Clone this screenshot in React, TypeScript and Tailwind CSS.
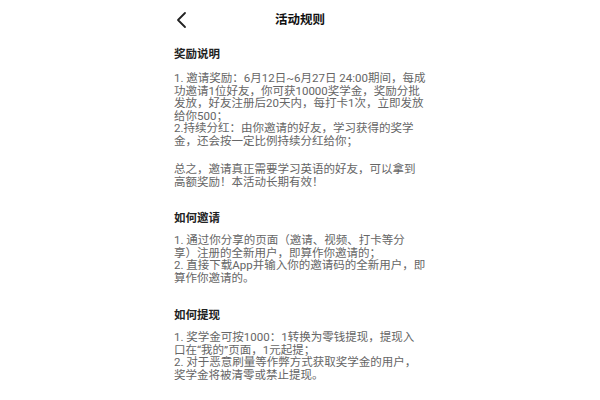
const sections = [
  {
    title: "奖励说明",
    paragraphs: [
      [
        "1. 邀请奖励：6月12日~6月27日 24:00期间，每成",
        "功邀请1位好友，你可获10000奖学金，奖励分批",
        "发放，好友注册后20天内，每打卡1次，立即发放",
        "给你500；",
        "2.持续分红：由你邀请的好友，学习获得的奖学",
        "金，还会按一定比例持续分红给你；",
      ],
      ["总之，邀请真正需要学习英语的好友，可以拿到", "高额奖励！本活动长期有效！"],
    ],
  },
  {
    title: "如何邀请",
    paragraphs: [
      [
        "1. 通过你分享的页面（邀请、视频、打卡等分",
        "享）注册的全新用户，即算作你邀请的；",
        "2. 直接下载App并输入你的邀请码的全新用户，即",
        "算作你邀请的。",
      ],
    ],
  },
  {
    title: "如何提现",
    paragraphs: [
      [
        "1. 奖学金可按1000：1转换为零钱提现，提现入",
        "口在“我的”页面，1元起提；",
        "2. 对于恶意刷量等作弊方式获取奖学金的用户，",
        "奖学金将被清零或禁止提现。",
      ],
    ],
  },
];

export default function App() {
  return (
    <div
      className="h-[400px] w-[600px] overflow-hidden bg-white"
      style={{ fontFamily: 'Roboto, "Noto Sans CJK SC", sans-serif' }}
    >
      <div className="mx-auto w-[252px]">
        {/* Nav bar */}
        <div className="grid h-[40px] grid-cols-[1fr_auto_1fr] items-center">
          <svg width="14" height="18" viewBox="0 0 14 18" className="ml-[2px]">
            <path d="M9 2 L2 9 L9 16" fill="none" stroke="#222" strokeWidth="1.8" strokeLinecap="round" strokeLinejoin="round" />
          </svg>
          <div className="text-[12.5px] font-bold text-[#111]">活动规则</div>
          <div />
        </div>

        <div className="pt-[6px]">
          {sections.map((s, i) => (
            <section key={s.title} className={i === 0 ? "" : i === 1 ? "mt-[22px]" : "mt-[23px]"}>
              <h2 className="text-[11.5px] font-bold leading-[16px] text-[#222]">{s.title}</h2>
              <div className={i === 0 ? "mt-[10px]" : "mt-[8px]"}>
                {s.paragraphs.map((p, j) => (
                  <p
                    key={j}
                    className={`whitespace-nowrap text-[11.5px] leading-[12.5px] text-[#666] ${j > 0 ? "mt-[16px]" : ""}`}
                  >
                    {p.map((line, k) => (
                      <span key={k} className="block">
                        {line}
                      </span>
                    ))}
                  </p>
                ))}
              </div>
            </section>
          ))}
        </div>
      </div>
    </div>
  );
}
